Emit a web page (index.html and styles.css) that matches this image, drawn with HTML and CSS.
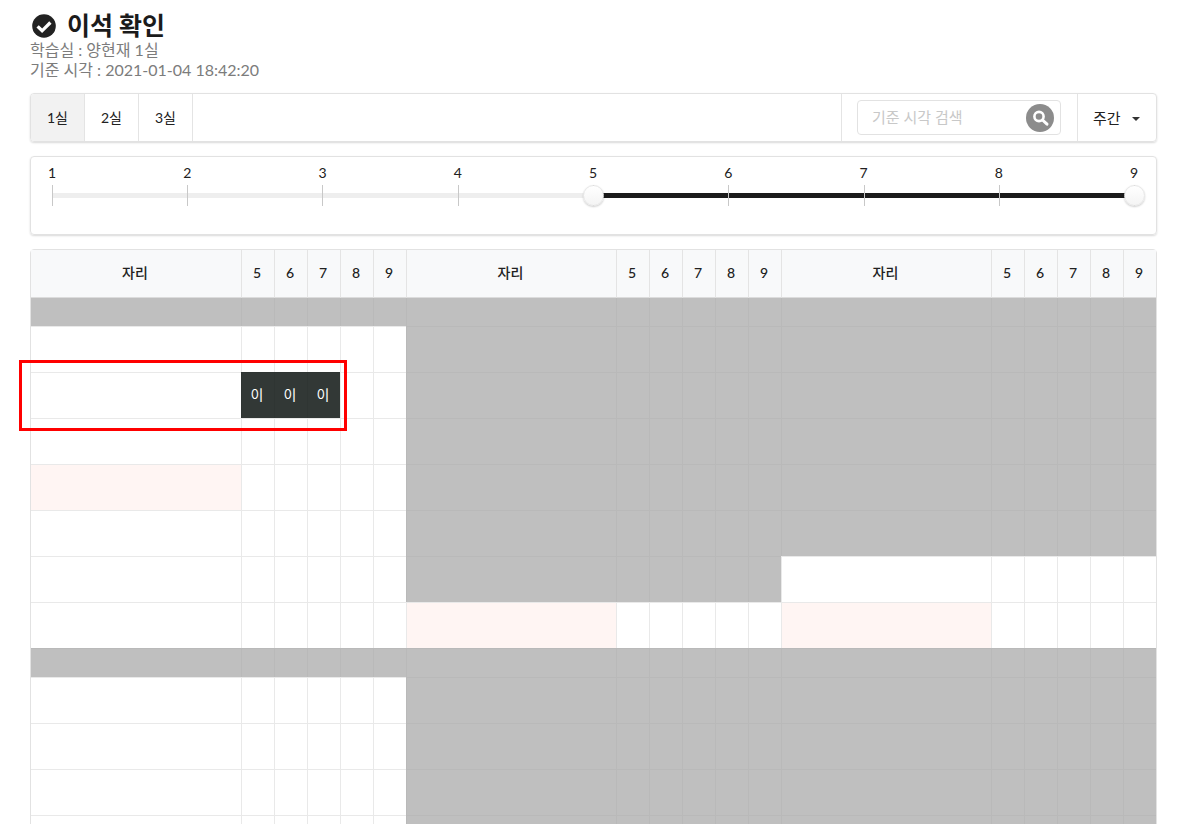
FILE: index.html
```html
<!DOCTYPE html>
<html lang="ko">
<head>
    <meta charset="UTF-8">
    <title>이석 확인</title>
    <link rel="stylesheet" href="styles.css">
</head>
<body>
<div class="page">
    <div class="head">
        <h1 class="title">
            <svg class="title_icon" viewBox="0 0 24 24"><circle cx="12" cy="12" r="11.8" fill="#222"/><path d="M5.6 12.4l4.5 4.4 8.3-8.3" fill="none" stroke="#fff" stroke-width="3.3"/></svg>
            이석 확인
        </h1>
        <div class="sub">학습실 : 양현재 1실</div>
        <div class="sub">기준 시각 : 2021-01-04 18:42:20</div>
    </div>

    <div class="bar">
        <a class="tab active">1실</a>
        <a class="tab">2실</a>
        <a class="tab">3실</a>
        <div class="search">
            <div class="search_box">
                <span class="search_ph">기준 시각 검색</span>
                <span class="search_btn">
                    <svg viewBox="0 0 28 28" width="28" height="28"><circle cx="13" cy="12.5" r="4.6" fill="none" stroke="#fff" stroke-width="2.6"/><path d="M16.5 16l4.5 4.2" stroke="#fff" stroke-width="3" stroke-linecap="round"/></svg>
                </span>
            </div>
        </div>
        <div class="period">주간<span class="caret"></span></div>
    </div>

    <div class="slider">
        <div class="scale">
            <div class="mark"><span>1</span></div>
            <div class="mark"><span>2</span></div>
            <div class="mark"><span>3</span></div>
            <div class="mark"><span>4</span></div>
            <div class="mark"><span>5</span></div>
            <div class="mark"><span>6</span></div>
            <div class="mark"><span>7</span></div>
            <div class="mark"><span>8</span></div>
            <div class="mark"><span>9</span></div>
            <div class="track"><div class="track_on"></div></div>
            <div class="handle h_left"></div>
            <div class="handle h_right"></div>
        </div>
    </div>

    <div class="table_wrap">
        <table class="seats">
            <colgroup>
                <col class="c_seat"><col class="c_h"><col class="c_h"><col class="c_h"><col class="c_h"><col class="c_h">
                <col class="c_seat"><col class="c_h"><col class="c_h"><col class="c_h"><col class="c_h"><col class="c_h">
                <col class="c_seat"><col class="c_h"><col class="c_h"><col class="c_h"><col class="c_h"><col class="c_h">
            </colgroup>
            <thead>
                <tr>
                    <th>자리</th><th>5</th><th>6</th><th>7</th><th>8</th><th>9</th>
                    <th>자리</th><th>5</th><th>6</th><th>7</th><th>8</th><th>9</th>
                    <th>자리</th><th>5</th><th>6</th><th>7</th><th>8</th><th>9</th>
                </tr>
            </thead>
            <tbody>
                <tr class="band first">
                    <td class="off"></td><td class="off"></td><td class="off"></td><td class="off"></td><td class="off"></td><td class="off"></td>
                    <td class="off"></td><td class="off"></td><td class="off"></td><td class="off"></td><td class="off"></td><td class="off"></td>
                    <td class="off"></td><td class="off"></td><td class="off"></td><td class="off"></td><td class="off"></td><td class="off"></td>
                </tr>
                <tr>
                    <td></td><td></td><td></td><td></td><td></td><td></td>
                    <td class="off"></td><td class="off"></td><td class="off"></td><td class="off"></td><td class="off"></td><td class="off"></td>
                    <td class="off"></td><td class="off"></td><td class="off"></td><td class="off"></td><td class="off"></td><td class="off"></td>
                </tr>
                <tr>
                    <td></td><td class="away">이</td><td class="away">이</td><td class="away">이</td><td></td><td></td>
                    <td class="off"></td><td class="off"></td><td class="off"></td><td class="off"></td><td class="off"></td><td class="off"></td>
                    <td class="off"></td><td class="off"></td><td class="off"></td><td class="off"></td><td class="off"></td><td class="off"></td>
                </tr>
                <tr>
                    <td></td><td></td><td></td><td></td><td></td><td></td>
                    <td class="off"></td><td class="off"></td><td class="off"></td><td class="off"></td><td class="off"></td><td class="off"></td>
                    <td class="off"></td><td class="off"></td><td class="off"></td><td class="off"></td><td class="off"></td><td class="off"></td>
                </tr>
                <tr>
                    <td class="pink"></td><td></td><td></td><td></td><td></td><td></td>
                    <td class="off"></td><td class="off"></td><td class="off"></td><td class="off"></td><td class="off"></td><td class="off"></td>
                    <td class="off"></td><td class="off"></td><td class="off"></td><td class="off"></td><td class="off"></td><td class="off"></td>
                </tr>
                <tr>
                    <td></td><td></td><td></td><td></td><td></td><td></td>
                    <td class="off"></td><td class="off"></td><td class="off"></td><td class="off"></td><td class="off"></td><td class="off"></td>
                    <td class="off"></td><td class="off"></td><td class="off"></td><td class="off"></td><td class="off"></td><td class="off"></td>
                </tr>
                <tr>
                    <td></td><td></td><td></td><td></td><td></td><td></td>
                    <td class="off"></td><td class="off"></td><td class="off"></td><td class="off"></td><td class="off"></td><td class="off"></td>
                    <td></td><td></td><td></td><td></td><td></td><td></td>
                </tr>
                <tr>
                    <td></td><td></td><td></td><td></td><td></td><td></td>
                    <td class="pink"></td><td></td><td></td><td></td><td></td><td></td>
                    <td class="pink"></td><td></td><td></td><td></td><td></td><td></td>
                </tr>
                <tr class="band">
                    <td class="off"></td><td class="off"></td><td class="off"></td><td class="off"></td><td class="off"></td><td class="off"></td>
                    <td class="off"></td><td class="off"></td><td class="off"></td><td class="off"></td><td class="off"></td><td class="off"></td>
                    <td class="off"></td><td class="off"></td><td class="off"></td><td class="off"></td><td class="off"></td><td class="off"></td>
                </tr>
                <tr>
                    <td></td><td></td><td></td><td></td><td></td><td></td>
                    <td class="off"></td><td class="off"></td><td class="off"></td><td class="off"></td><td class="off"></td><td class="off"></td>
                    <td class="off"></td><td class="off"></td><td class="off"></td><td class="off"></td><td class="off"></td><td class="off"></td>
                </tr>
                <tr>
                    <td></td><td></td><td></td><td></td><td></td><td></td>
                    <td class="off"></td><td class="off"></td><td class="off"></td><td class="off"></td><td class="off"></td><td class="off"></td>
                    <td class="off"></td><td class="off"></td><td class="off"></td><td class="off"></td><td class="off"></td><td class="off"></td>
                </tr>
                <tr>
                    <td></td><td></td><td></td><td></td><td></td><td></td>
                    <td class="off"></td><td class="off"></td><td class="off"></td><td class="off"></td><td class="off"></td><td class="off"></td>
                    <td class="off"></td><td class="off"></td><td class="off"></td><td class="off"></td><td class="off"></td><td class="off"></td>
                </tr>
                <tr>
                    <td></td><td></td><td></td><td></td><td></td><td></td>
                    <td class="off"></td><td class="off"></td><td class="off"></td><td class="off"></td><td class="off"></td><td class="off"></td>
                    <td class="off"></td><td class="off"></td><td class="off"></td><td class="off"></td><td class="off"></td><td class="off"></td>
                </tr>
            </tbody>
        </table>
        <div class="mark_box"></div>
    </div>
</div>
</body>
</html>
```

FILE: styles.css
```css
html, body {
    margin: 0;
    height: 100%;
    overflow: hidden;
    background: #fff;
}
body {
    font-family: "Lato", "Noto Sans CJK KR", sans-serif;
    color: #212121;
}
.page {
    padding: 12px 24px 0 30px;
}
.title {
    display: flex;
    align-items: center;
    gap: 11px;
    margin: 0;
    padding-left: 2px;
    height: 27px;
    font-size: 25px;
    font-weight: 700;
    line-height: 27px;
    color: #1b1b1b;
}
.title_icon {
    width: 24px;
    height: 24px;
}
.sub {
    font-size: 16px;
    line-height: 20px;
    color: #7c7c7c;
}
.head {
    margin-bottom: 13px;
}
.sub:first-of-type {
    margin-top: 1px;
}

/* barra de cima */
.bar {
    display: flex;
    height: 47px;
    border: 1px solid #e2e2e2;
    border-radius: 4px;
    box-shadow: 0 1px 2px rgba(0, 0, 0, .15);
    overflow: hidden;
}
.tab {
    width: 53px;
    border-right: 1px solid #e4e4e4;
    font-size: 14px;
    line-height: 47px;
    text-align: center;
    color: #212121;
}
.tab.active {
    background: #f2f2f2;
}
.search {
    display: flex;
    align-items: center;
    margin-left: auto;
    padding: 0 16px 0 15px;
    border-left: 1px solid #e4e4e4;
    border-right: 1px solid #e4e4e4;
}
.search_box {
    display: flex;
    align-items: center;
    justify-content: space-between;
    box-sizing: border-box;
    width: 204px;
    height: 35px;
    padding: 0 6px 0 14px;
    border: 1px solid #e2e2e2;
    border-radius: 4px;
}
.search_ph {
    padding-bottom: 2px;
    font-size: 15px;
    color: #c8c8c8;
}
.search_btn {
    width: 28px;
    height: 28px;
    border-radius: 50%;
    background: #8c8c8c;
}
.period {
    display: flex;
    align-items: center;
    width: 78px;
    box-sizing: border-box;
    padding: 0 0 1px 15px;
    font-size: 15px;
}
.caret {
    margin-left: 11px;
    margin-top: 3px;
    border-top: 4px solid #333;
    border-left: 4px solid transparent;
    border-right: 4px solid transparent;
}

/* slider */
.slider {
    height: 77px;
    margin-top: 14px;
    padding: 0 20.9px 0 20.95px;
    border: 1px solid #e2e2e2;
    border-radius: 4px;
    box-shadow: 0 1px 2px rgba(0, 0, 0, .15);
}
.scale {
    position: relative;
    display: flex;
    justify-content: space-between;
    height: 48px;
}
.mark {
    position: relative;
    width: 1px;
    height: 21px;
    margin-top: 28px;
    background: #c8c8c8;
    z-index: 1;
}
.mark span {
    position: absolute;
    top: -20px;
    left: -10px;
    width: 20px;
    font-size: 14px;
    line-height: 16px;
    text-align: center;
}
.track {
    position: absolute;
    top: 36px;
    left: 0;
    right: 0;
    height: 5px;
    background: #eee;
}
.track_on {
    height: 100%;
    margin-left: 50%;
    background: #1b1b1b;
}
.handle {
    position: absolute;
    top: 28px;
    width: 19px;
    height: 19px;
    margin-left: -11px;
    border: 1px solid #e6e6e6;
    border-radius: 50%;
    background: linear-gradient(#fff, #f4f4f4);
    box-shadow: 0 1px 2px rgba(0, 0, 0, .2);
    z-index: 2;
}
.h_left {
    left: 50%;
}
.h_right {
    left: 100%;
}

/* tabela */
.table_wrap {
    position: relative;
    margin-top: 14px;
}
.seats {
    table-layout: fixed;
    width: 1127px;
    border-collapse: separate;
    border-spacing: 0;
    border: 1px solid #e2e2e2;
    border-radius: 4px 4px 0 0;
}
.c_seat {
    width: 210px;
}
.c_h {
    width: 33px;
}
.seats th {
    height: 48px;
    padding: 0 2px 3px 0;
    box-sizing: border-box;
    border-left: 1px solid #e4e4e4;
    border-bottom: 1px solid #dcdcdc;
    background: #f8f9fa;
    font-size: 14px;
    font-weight: 500;
    color: #212121;
}
.seats td {
    height: 46px;
    padding: 0;
    box-sizing: border-box;
    border-left: 1px solid #e9e9e9;
    border-top: 1px solid #e9e9e9;
    font-size: 13px;
    text-align: center;
}
.seats tr > :first-child {
    border-left: 0;
}
.seats .band td {
    height: 29px;
}
.seats .first td {
    height: 28px;
    border-top: 0;
}
.seats td.off {
    background: #bfbfbf;
    border-color: #b9b9b9;
}
.seats td.pink {
    background: #fff5f3;
}
.seats td.away {
    padding: 0 2px 3px 0;
    background: #323836;
    border-color: #2f3533;
    font-size: 14px;
    color: #fff;
}
.mark_box {
    position: absolute;
    top: 111px;
    left: -11px;
    width: 322px;
    height: 65px;
    border: 3px solid #f00;
}
```
